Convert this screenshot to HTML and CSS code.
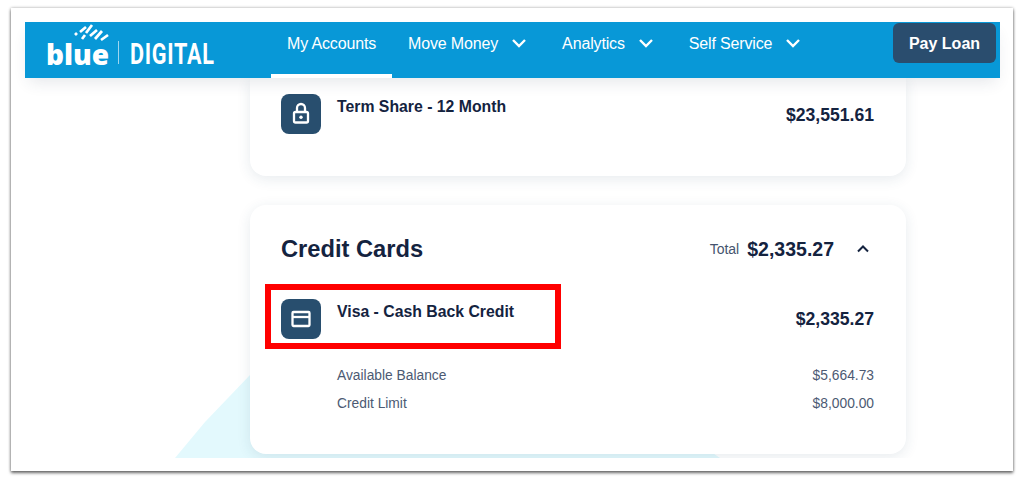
FILE: index.html
```html
<!DOCTYPE html>
<html>
<head>
    <title>blue Digital - My Accounts</title>
    <link rel="stylesheet" href="styles.css">
</head>
<body>
    <div class="shot">
        <header class="topbar">
            <div class="logo">
                <svg class="logo-streaks" width="38" height="22" viewBox="0 0 38 22">
                    <g stroke="#fff" stroke-width="2.7">
                        <path d="M3 13l2-2M8 10l6-5M10 17l3-4M14 11l6-8M18 14l7-6M23 17l7-8M29 18l7-5"/>
                    </g>
                </svg>
                <span class="logo-blue">blue</span>
                <span class="logo-line"></span>
                <span class="logo-digital">DIGITAL</span>
            </div>
            <nav class="nav">
                <a class="nav-item active">My Accounts</a>
                <a class="nav-item">Move Money
                    <svg class="chev" width="24" height="24" viewBox="0 0 24 24"><path d="M6 9l6 6 6-6"/></svg>
                </a>
                <a class="nav-item">Analytics
                    <svg class="chev" width="24" height="24" viewBox="0 0 24 24"><path d="M6 9l6 6 6-6"/></svg>
                </a>
                <a class="nav-item">Self Service
                    <svg class="chev" width="24" height="24" viewBox="0 0 24 24"><path d="M6 9l6 6 6-6"/></svg>
                </a>
            </nav>
            <button class="pay-btn">Pay Loan</button>
        </header>

        <main class="content">
            <div class="bg-shape"></div>

            <section class="card card-top">
                <div class="account">
                    <span class="acct-icon">
                        <svg width="24" height="24" viewBox="0 0 24 24" fill="none" stroke="#fff" stroke-width="2.3">
                            <rect x="5" y="10" width="14" height="10.5" rx="1.5"/>
                            <path d="M8 10V6a4 4 0 0 1 8 0v4"/>
                            <circle cx="12" cy="15.2" r="1.7" fill="#fff" stroke="none"/>
                        </svg>
                    </span>
                    <span class="acct-name">Term Share - 12 Month</span>
                    <span class="acct-amount">$23,551.61</span>
                </div>
            </section>

            <section class="card card-credit">
                <div class="card-head">
                    <h2>Credit Cards</h2>
                    <div class="total">
                        <span class="total-label">Total</span>
                        <span class="total-value">$2,335.27</span>
                        <svg class="chev-up" width="24" height="24" viewBox="0 0 24 24"><path d="M7 14.5l5-5 5 5"/></svg>
                    </div>
                </div>
                <div class="account">
                    <span class="acct-icon">
                        <svg width="24" height="24" viewBox="0 0 24 24" fill="none" stroke="#fff" stroke-width="2.3">
                            <rect x="3.5" y="5" width="17" height="14" rx="1"/>
                            <path d="M3.5 10h17"/>
                        </svg>
                    </span>
                    <span class="acct-name">Visa - Cash Back Credit</span>
                    <span class="acct-amount">$2,335.27</span>
                </div>
                <div class="detail">
                    <span>Available Balance</span>
                    <span>$5,664.73</span>
                </div>
                <div class="detail">
                    <span>Credit Limit</span>
                    <span>$8,000.00</span>
                </div>
            </section>
        </main>

        <div class="callout"></div>
    </div>
</body>
</html>
```

FILE: styles.css
```css
/* Global styles */
body {
    margin: 0;
    padding: 8px 0 15px;
    background-color: #fff;
    font-family: 'Liberation Sans', sans-serif;
    color: #14233f;
}

/* Screenshot frame */
.shot {
    position: relative;
    box-sizing: border-box;
    width: 1002px;
    height: 463px;
    margin: 0 11px;
    padding: 14px 13px 0 14px;
    background-color: #fff;
    box-shadow: 0 2px 3px rgba(0, 0, 0, 0.55), 0 0 3px rgba(0, 0, 0, 0.3);
}

/* Header */
.topbar {
    position: relative;
    z-index: 2;
    display: flex;
    height: 56px;
    background-color: #0898d7;
    box-shadow: 0 8px 16px -4px rgba(40, 60, 80, 0.12);
    color: #fff;
}

.logo {
    position: relative;
    display: flex;
    align-items: flex-end;
    width: 246px;
    height: 56px;
    padding-left: 21px;
    box-sizing: border-box;
    flex: none;
}

.logo-streaks {
    position: absolute;
    left: 47px;
    top: 0;
}

.logo-blue {
    font-family: 'Open Sans', sans-serif;
    font-weight: 800;
    font-size: 28px;
    line-height: 40px;
    height: 44px;
    width: 61px;
}

.logo-line {
    width: 1px;
    height: 23px;
    margin: 0 11px 14px 11px;
    background-color: #9ed6f0;
}

.logo-digital {
    font-family: Roboto, sans-serif;
    font-weight: 700;
    font-size: 30px;
    line-height: 36px;
    height: 42px;
    letter-spacing: 1px;
    transform: scaleX(0.72);
    transform-origin: left center;
}

.nav {
    display: flex;
    flex: 1;
    font-size: 16px;
    letter-spacing: -0.15px;
}

.nav-item {
    display: flex;
    align-items: flex-start;
    box-sizing: border-box;
    height: 56px;
    padding: 12px 15px 0 16px;
    line-height: 19px;
    white-space: nowrap;
}

.nav-item.active {
    width: 121px;
    padding-right: 0;
    border-bottom: 4px solid #fff;
}

.chev {
    margin: -3px 0 0 9px;
    fill: none;
    stroke: #fff;
    stroke-width: 2.4;
}

.pay-btn {
    flex: none;
    width: 103px;
    height: 40px;
    margin: 1px 4px 0 0;
    padding: 1px 0 0;
    border: none;
    border-radius: 6px;
    background-color: #2a4d6e;
    color: #fff;
    font-family: 'Liberation Sans', sans-serif;
    font-size: 16px;
    font-weight: bold;
}

/* Main area */
.content {
    position: relative;
    box-sizing: border-box;
    height: 380px;
    padding-left: 225px;
    overflow: hidden;
}

.bg-shape {
    position: absolute;
    left: 150px;
    bottom: 0;
    width: 545px;
    height: 100px;
    background-color: #e3f9fd;
    clip-path: polygon(0 100%, 30px 64px, 75px 17px, 100px 0, 400px 0, 545px 100%);
}

.card {
    position: relative;
    box-sizing: border-box;
    width: 656px;
    background-color: #fff;
    border-radius: 16px;
    box-shadow: 0 3px 14px rgba(40, 70, 100, 0.11);
}

.card-top {
    height: 98px;
    margin-bottom: 29px;
    padding: 16px 32px 0 31px;
    border-radius: 0 0 16px 16px;
}

.card-credit {
    height: 249px;
    padding: 24px 32px 0 31px;
}

.card-head {
    display: flex;
    justify-content: space-between;
    align-items: center;
    height: 40px;
    margin-bottom: 30px;
}

h2 {
    margin: 0;
    font-size: 23.7px;
    font-weight: 700;
}

.total {
    display: flex;
    align-items: center;
}

.total-label {
    margin-right: 8px;
    font-size: 14px;
    color: #45546e;
}

.total-value {
    font-size: 19.5px;
    font-weight: bold;
}

.chev-up {
    margin: 0 -1px 0 17px;
    fill: none;
    stroke: #14233f;
    stroke-width: 2;
}

/* Account rows */
.account {
    display: flex;
    height: 40px;
}

.acct-icon {
    display: flex;
    align-items: center;
    justify-content: center;
    flex: none;
    width: 40px;
    height: 40px;
    border-radius: 8px;
    background-color: #284e6e;
}

.acct-name {
    flex: 1;
    margin: 4px 0 0 16px;
    font-size: 15.8px;
    line-height: 18px;
    font-weight: 700;
}

.acct-amount {
    margin-top: 10px;
    font-size: 17.6px;
    line-height: 22px;
    font-weight: bold;
}

.card-credit .acct-amount {
    margin-top: 9px;
}

.detail {
    display: flex;
    justify-content: space-between;
    height: 28px;
    padding-left: 56px;
    font-size: 13.8px;
    line-height: 28px;
    color: #4c5a73;
}

.account + .detail {
    margin-top: 23px;
}

/* Red annotation box */
.callout {
    position: absolute;
    z-index: 3;
    left: 254px;
    top: 276px;
    box-sizing: border-box;
    width: 296px;
    height: 65px;
    border: 6px solid #ff0000;
}
```
